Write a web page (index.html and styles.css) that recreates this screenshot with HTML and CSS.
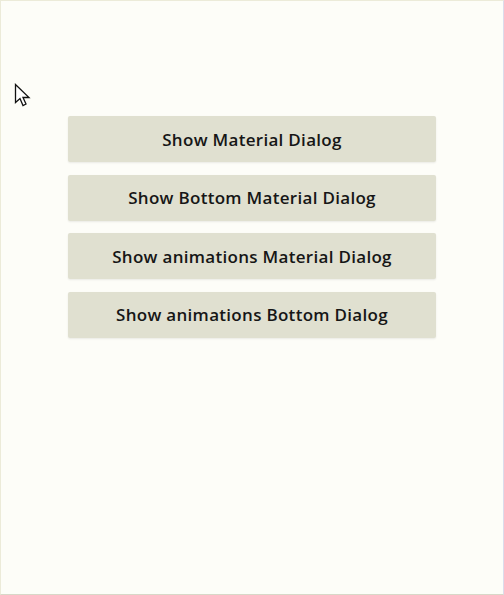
FILE: index.html
```html
<!DOCTYPE html>
<html>
<head>
<meta charset="utf-8">
<link rel="stylesheet" href="styles.css">
</head>
<body>
<div class="page">
  <svg class="cursor" width="18" height="26" viewBox="0 0 18 26">
    <path d="M1.5 1.5 L1.5 19.5 L6 15.5 L9 22.5 L12 21 L9 14.5 L15 14.5 Z" fill="#fff" stroke="#111" stroke-width="1.3" stroke-linejoin="miter"/>
  </svg>
  <div class="list">
    <button class="btn">Show Material Dialog</button>
    <button class="btn">Show Bottom Material Dialog</button>
    <button class="btn">Show animations Material Dialog</button>
    <button class="btn">Show animations Bottom Dialog</button>
  </div>
</div>
</body>
</html>
```
FILE: styles.css
```css
html, body {
  margin: 0;
  padding: 0;
  background: #fdfdf8;
}
.page {
  position: relative;
  width: 504px;
  height: 595px;
  box-sizing: border-box;
  border: 1px solid #ecebd9;
  border-right-color: #dcdcec;
  border-bottom-color: #d8d8c8;
}
.cursor {
  position: absolute;
  left: 13px;
  top: 82px;
}
.list {
  display: flex;
  flex-direction: column;
  align-items: center;
  gap: 12.67px;
  padding-top: 115px;
}
.btn {
  width: 368px;
  height: 46px;
  border: none;
  border-radius: 2px;
  background: #e0e0d0;
  color: #161616;
  font-family: "Open Sans", sans-serif;
  font-weight: 600;
  font-size: 17px;
  letter-spacing: 0.3px;
  padding: 0;
  box-shadow: 0 1px 2px rgba(0,0,0,0.08);
}
```
